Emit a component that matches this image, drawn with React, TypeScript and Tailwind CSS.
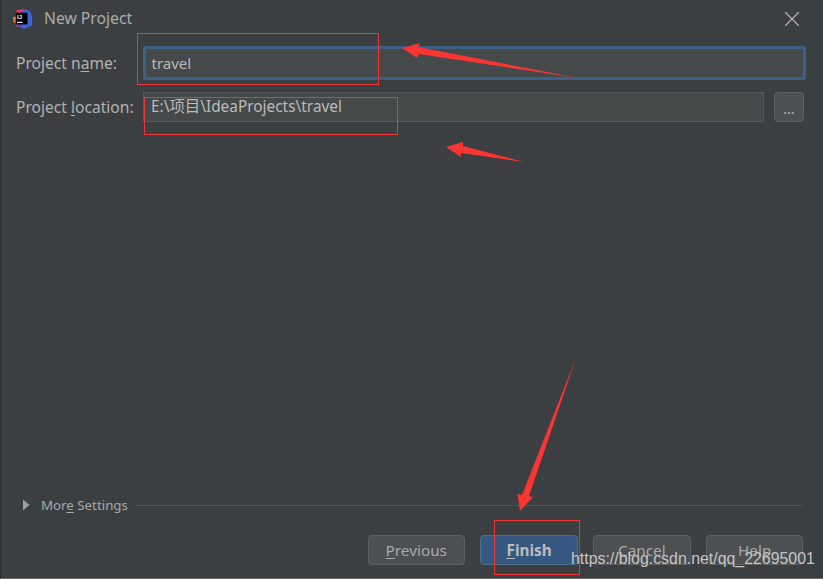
import React from 'react';
import { X } from 'lucide-react';

const font = { fontFamily: '"Noto Sans", "Noto Sans CJK SC", sans-serif' };

const Mnemonic: React.FC<{ children: React.ReactNode }> = ({ children }) => (
  <span className="underline underline-offset-2 decoration-1">{children}</span>
);

const IdeaLogo = () => (
  <svg width="20" height="20" viewBox="0 0 22 22" className="shrink-0">
    <path d="M4 1 L12 0 L12 8 L3 12 Z" fill="#f0336e" />
    <path d="M0 9 L5 8 L5 15 L1 15 Z" fill="#f58a1f" />
    <path d="M2 12 L9 21 L13 21 L3 19 Z" fill="#a33bb5" />
    <path d="M14 0 L19 3 L21 8 L21 18 L12 22 L8 19 L8 5 Z" fill="#3e63dd" />
    <rect x="3" y="4" width="13" height="13" fill="#000000" />
    <text x="4.5" y="10.5" fill="#ffffff" fontSize="6.5" fontWeight="700" fontFamily="Liberation Sans, sans-serif">IJ</text>
    <rect x="4.5" y="14" width="6" height="1.2" fill="#ffffff" />
  </svg>
);

const DialogButton: React.FC<{ children: React.ReactNode; primary?: boolean }> = ({ children, primary }) => (
  <button
    className={
      primary
        ? 'h-[30px] w-[97.3px] rounded-[4px] border border-[#4c708c] bg-[#365880] text-[15.3px] font-bold text-[#bbbbbb]'
        : 'h-[30px] w-[97.3px] rounded-[4px] border border-[#5e6060] bg-[#4c5052] text-[15.3px] text-[#a9a9a9]'
    }
  >
    {children}
  </button>
);

// red marks drawn on top of the screenshot
const Annotations = () => (
  <>
    <div className="absolute left-[136px] top-[33px] h-[52px] w-[242px] border border-[#f03535]" />
    <div className="absolute left-[143px] top-[97px] h-[38px] w-[254px] border border-[#f03535]" />
    <div className="absolute left-[493px] top-[520px] h-[55px] w-[86px] border border-[#f03535]" />
    <svg width="823" height="579" className="absolute left-[-1px] top-0 pointer-events-none">
      <polygon points="402,48 420,43 418,47 578,78 419,54 417,58" fill="#fb3434" />
      <polygon points="446,147 463,142 463,146 524,162 461,153 461,157" fill="#fb3434" />
      <polygon points="520,511 517.5,494 522,495 576,358 529,496 533,497" fill="#fb3434" />
    </svg>
    <div
      className="absolute left-[570px] top-[549px] text-[15.9px] leading-[20px] text-[#c4c6c7] whitespace-nowrap"
      style={{ fontFamily: '"Liberation Sans", sans-serif' }}
    >
      https://blog.csdn.net/qq_22695001
    </div>
  </>
);

export default function App() {
  return (
    <div
      className="relative flex h-[579px] w-[823px] flex-col overflow-hidden border-l border-[#2f3133] border-b border-b-[#6a6c6d] bg-[#3c3f41] text-[#bbbbbb]"
      style={font}
    >
      <div className="flex h-[37px] items-center pl-[12px] pr-[18px] shrink-0">
        <IdeaLogo />
        <span className="ml-[11px] text-[15.7px] text-[#a9adad]">New Project</span>
        <X className="ml-auto h-[26px] w-[26px] text-[#b5b5b5]" strokeWidth={1} />
      </div>

      <div className="flex h-[34px] items-center mt-[9px] pl-[15px] pr-[17px] shrink-0">
        <label className="w-[127px] pt-[2px] text-[15.6px] text-[#b0b2b2]">
          Project n<Mnemonic>a</Mnemonic>me:
        </label>
        <div className="flex h-[34px] flex-1 items-center rounded-[2px] border-[3px] border-[#3d6185] bg-[#45494a] pl-[5.5px] text-[15px] text-[#bbbbbb]">
          travel
        </div>
      </div>

      <div className="flex h-[30px] items-center mt-[12px] pl-[15px] pr-[19px] shrink-0">
        <label className="w-[127px] pt-[2px] text-[15.6px] text-[#b0b2b2]">
          Project <Mnemonic>l</Mnemonic>ocation:
        </label>
        <div className="flex h-[30px] flex-1 items-start border-[1.5px] border-[#565a5b] bg-[#45494a] pl-[7px] pt-[2px] text-[15.4px] leading-[24px] text-[#bbbbbb]">
          {'E:\\项目\\IdeaProjects\\travel'}
        </div>
        <button className="ml-[10px] flex h-[30px] w-[30px] items-center justify-center rounded-[4px] border border-[#5e6060] bg-[#4c5052] pt-[3px] text-[14px] text-[#c0b8ac]">
          ...
        </button>
      </div>

      <div className="flex-1" />

      <div className="flex h-[22px] items-center pl-[21px] pr-[19.7px] shrink-0">
        <svg width="8" height="12" viewBox="0 0 8 12" className="shrink-0 -mt-[2px]">
          <path d="M1 0.5 L7.5 6 L1 11.5 Z" fill="#9c9f9f" />
        </svg>
        <span className="ml-[11px] text-[13.3px] text-[#a6a9a9]">
          Mor<Mnemonic>e</Mnemonic> Settings
        </span>
        <div className="ml-2 h-px flex-1 bg-[#515455] -mt-[2px]" />
      </div>

      <div className="flex justify-end gap-[15.5px] pr-[19.7px] pt-[18px] pb-[13px] shrink-0">
        <DialogButton>
          <Mnemonic>P</Mnemonic>revious
        </DialogButton>
        <DialogButton primary>
          <Mnemonic>F</Mnemonic>inish
        </DialogButton>
        <DialogButton>Cancel</DialogButton>
        <DialogButton>Help</DialogButton>
      </div>

      <Annotations />
    </div>
  );
}
